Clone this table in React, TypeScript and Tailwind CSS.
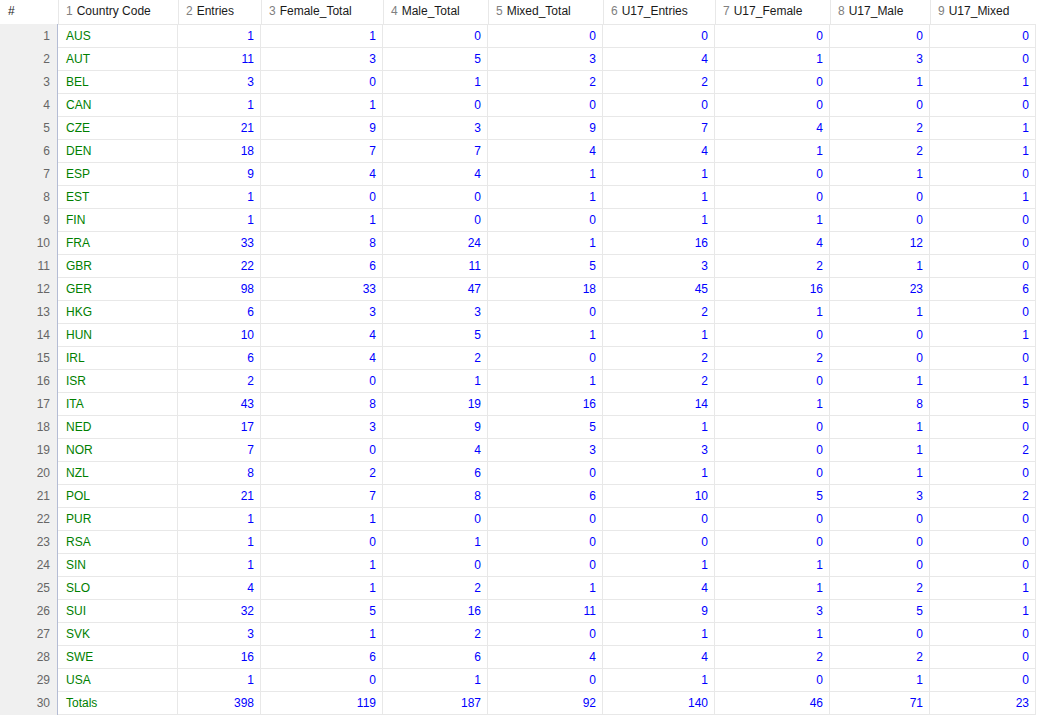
const COLUMNS = [
  "Country Code",
  "Entries",
  "Female_Total",
  "Male_Total",
  "Mixed_Total",
  "U17_Entries",
  "U17_Female",
  "U17_Male",
  "U17_Mixed",
];

const ROWS: [string, ...number[]][] = [
  ["AUS", 1, 1, 0, 0, 0, 0, 0, 0],
  ["AUT", 11, 3, 5, 3, 4, 1, 3, 0],
  ["BEL", 3, 0, 1, 2, 2, 0, 1, 1],
  ["CAN", 1, 1, 0, 0, 0, 0, 0, 0],
  ["CZE", 21, 9, 3, 9, 7, 4, 2, 1],
  ["DEN", 18, 7, 7, 4, 4, 1, 2, 1],
  ["ESP", 9, 4, 4, 1, 1, 0, 1, 0],
  ["EST", 1, 0, 0, 1, 1, 0, 0, 1],
  ["FIN", 1, 1, 0, 0, 1, 1, 0, 0],
  ["FRA", 33, 8, 24, 1, 16, 4, 12, 0],
  ["GBR", 22, 6, 11, 5, 3, 2, 1, 0],
  ["GER", 98, 33, 47, 18, 45, 16, 23, 6],
  ["HKG", 6, 3, 3, 0, 2, 1, 1, 0],
  ["HUN", 10, 4, 5, 1, 1, 0, 0, 1],
  ["IRL", 6, 4, 2, 0, 2, 2, 0, 0],
  ["ISR", 2, 0, 1, 1, 2, 0, 1, 1],
  ["ITA", 43, 8, 19, 16, 14, 1, 8, 5],
  ["NED", 17, 3, 9, 5, 1, 0, 1, 0],
  ["NOR", 7, 0, 4, 3, 3, 0, 1, 2],
  ["NZL", 8, 2, 6, 0, 1, 0, 1, 0],
  ["POL", 21, 7, 8, 6, 10, 5, 3, 2],
  ["PUR", 1, 1, 0, 0, 0, 0, 0, 0],
  ["RSA", 1, 0, 1, 0, 0, 0, 0, 0],
  ["SIN", 1, 1, 0, 0, 1, 1, 0, 0],
  ["SLO", 4, 1, 2, 1, 4, 1, 2, 1],
  ["SUI", 32, 5, 16, 11, 9, 3, 5, 1],
  ["SVK", 3, 1, 2, 0, 1, 1, 0, 0],
  ["SWE", 16, 6, 6, 4, 4, 2, 2, 0],
  ["USA", 1, 0, 1, 0, 1, 0, 1, 0],
  ["Totals", 398, 119, 187, 92, 140, 46, 71, 23],
];

const GRID =
  "grid grid-cols-[58px_120px_83px_122px_105px_115px_112px_115px_100px_106px] w-[1036px]";

export default function App() {
  return (
    <div className="w-[1052px] h-[720px] bg-white overflow-hidden font-['Liberation_Sans',Arial,sans-serif] text-[12px]">
      <div className={`${GRID} h-[24px]`}>
        <div className="flex items-center pl-[8px] pb-[2px] text-[#222]">#</div>
        {COLUMNS.map((name, i) => (
          <div
            key={name}
            className="flex items-center gap-[4px] pl-[7px] pb-[2px] border-l border-[#e8e8e8] whitespace-nowrap"
          >
            <span className="text-[#808080]">{i + 1}</span>
            <span className="text-[#1a1a1a]">{name}</span>
          </div>
        ))}
      </div>

      {ROWS.map(([code, ...nums], r) => (
        <div key={code} className={`${GRID} h-[23px]`}>
          <div className="flex items-center justify-end pr-[7px] bg-[#f0f0f0] border-r border-[#b4bcd4] text-[#666]">
            {r + 1}
          </div>
          <div className="flex items-center pl-[8px] border-t border-r border-[#e8e8e8] text-[#008000]">
            {code}
          </div>
          {nums.map((n, c) => (
            <div
              key={c}
              className="flex items-center justify-end pr-[6px] border-t border-r border-[#e8e8e8] text-[#0000ff]"
            >
              {n}
            </div>
          ))}
        </div>
      ))}
      <div className={`${GRID} h-px`}>
        <div className="bg-[#f0f0f0] border-r border-[#b4bcd4]" />
        <div className="col-span-9 bg-[#e8e8e8]" />
      </div>
    </div>
  );
}
